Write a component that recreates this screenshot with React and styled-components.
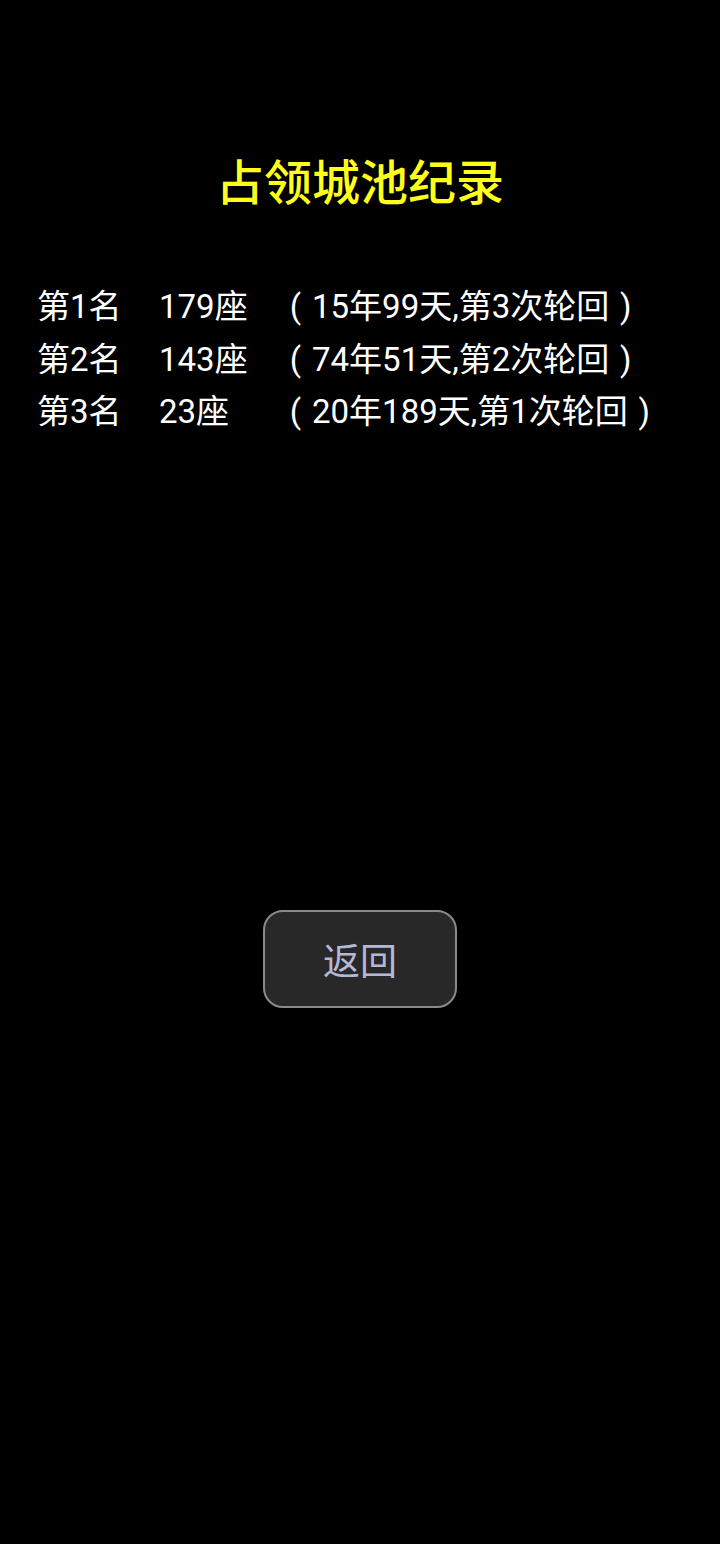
import React from 'react';
import styled, { createGlobalStyle } from 'styled-components';

const GlobalStyle = createGlobalStyle`
  html, body {
    margin: 0;
    padding: 0;
    background: #000;
  }
`;

const Screen = styled.div`
  display: flex;
  flex-direction: column;
  align-items: center;
  width: 720px;
  min-height: 1544px;
  background: #000;
  font-family: Roboto, "Noto Sans CJK SC", sans-serif;
`;

const Title = styled.h1`
  margin: 146px 0 0;
  font-family: "Noto Sans CJK SC", sans-serif;
  font-size: 48px;
  font-weight: 500;
  line-height: 66px;
  color: #ffff1a;
`;

const Records = styled.ul`
  align-self: stretch;
  margin: 69px 0 0;
  padding: 0 0 0 37px;
  list-style: none;
`;

const Row = styled.li`
  display: grid;
  grid-template-columns: 122px 120px auto;
  align-items: center;
  height: 52.5px;
  font-size: 33px;
  line-height: 40px;
  color: #fff;
`;

/* full-width bracket slot, ink centred like the device font */
const Paren = styled.span`
  display: inline-block;
  width: 1em;
  text-align: center;
`;

const Button = styled.button`
  margin-top: 471px;
  width: 194px;
  height: 98px;
  border: 2px solid #8a8a8e;
  border-radius: 20px;
  background: #282828;
  color: #b4b8d6;
  font-family: "Noto Sans CJK SC", sans-serif;
  font-size: 37px;
  cursor: pointer;
`;

const records = [
  { rank: '第1名', count: '179座', detail: '15年99天,第3次轮回' },
  { rank: '第2名', count: '143座', detail: '74年51天,第2次轮回' },
  { rank: '第3名', count: '23座', detail: '20年189天,第1次轮回' },
];

export default function App() {
  return (
    <>
      <GlobalStyle />
      <Screen>
        <Title>占领城池纪录</Title>
        <Records>
          {records.map(r => (
            <Row key={r.rank}>
              <span>{r.rank}</span>
              <span>{r.count}</span>
              <span>
                <Paren>(</Paren>
                {r.detail}
                <Paren>)</Paren>
              </span>
            </Row>
          ))}
        </Records>
        <Button>返回</Button>
      </Screen>
    </>
  );
}
